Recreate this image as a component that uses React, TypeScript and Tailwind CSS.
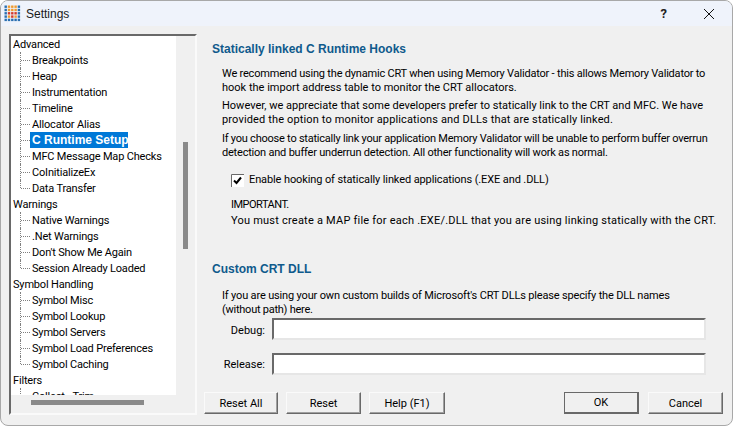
function Btn({ label, w, def }: { label: string; w: string; def?: boolean }) {
  return (
    <div className={`${w} h-[22px] shrink-0 flex items-center justify-center bg-[#f0f0f0] leading-none border ${def ? "border-[#696969] border-r-2 border-b-2" : "border-t-[#fafafa] border-l-[#fafafa] border-r-[#696969] border-b-[#696969] shadow-[inset_-1px_-1px_0_#a0a0a0]"}`}>
      {label}
    </div>
  );
}
type Item = { t: string; c?: boolean; sel?: boolean; last?: boolean };
const tree: Item[] = [
  { t: "Advanced" }, { t: "Breakpoints", c: true }, { t: "Heap", c: true }, { t: "Instrumentation", c: true }, { t: "Timeline", c: true },
  { t: "Allocator Alias", c: true }, { t: "C Runtime Setup", c: true, sel: true }, { t: "MFC Message Map Checks", c: true }, { t: "CoInitializeEx", c: true },
  { t: "Data Transfer", c: true, last: true }, { t: "Warnings" }, { t: "Native Warnings", c: true }, { t: ".Net Warnings", c: true },
  { t: "Don't Show Me Again", c: true }, { t: "Session Already Loaded", c: true, last: true }, { t: "Symbol Handling" }, { t: "Symbol Misc", c: true },
  { t: "Symbol Lookup", c: true }, { t: "Symbol Servers", c: true }, { t: "Symbol Load Preferences", c: true }, { t: "Symbol Caching", c: true, last: true },
  { t: "Filters" }, { t: "Collect - Trim", c: true },
];
function Row({ it }: { it: Item }) {
  if (!it.c) return <div className="h-4 pl-[2px] leading-[18px] whitespace-nowrap tracking-[-0.18px]">{it.t}</div>;
  return (
    <div className="h-4 flex items-center whitespace-nowrap relative">
      <span className={`absolute left-[9px] top-0 w-0 border-l border-dotted border-[#808080] ${it.last ? "h-2" : "h-4"}`} />
      <span className="ml-[10px] w-[9px] shrink-0 border-t border-dotted border-[#808080]" />
      {it.sel ? (
        <span className="h-4 w-[98px] pl-[2px] leading-[17px] bg-[#0078d7] text-white font-bold text-[12px] font-['Liberation_Sans',sans-serif]">{it.t}</span>
      ) : (
        <span className="pl-[2px] h-4 leading-[18px] tracking-[-0.18px]">{it.t}</span>
      )}
    </div>
  );
}
const input = "ml-[7px] w-[434px] h-[22px] bg-white border-2 border-t-[#696969] border-l-[#696969] border-r-[#e6e6e6] border-b-[#e6e6e6]";
function cell(r: number, c: number) {
  if (r === 4 || c === 4 || c === 0) return "#2a6fb0";
  if (r === 0) return "#ee9a2e";
  if ((r === 2 && c >= 1 && c <= 3) || (r === 3 && c === 2)) return "#d23a2a";
  return "#ee9a2e";
}
export default function App() {
  return (
    <div className="w-[733px] h-[427px] bg-white overflow-hidden">
      <div className="w-[733px] h-[426px] overflow-hidden bg-[#f0f0f0] text-[11px] text-black font-['Roboto',sans-serif] rounded-lg border border-[#a8a8a8] flex flex-col">
        <div className="h-[25px] shrink-0 bg-[#eff3fb] flex items-center pl-[3px]">
          <svg width="17" height="17" viewBox="0 0 17 17" className="mr-[5px]">
            {[0, 1, 2, 3, 4].map((r) => [0, 1, 2, 3, 4].map((c) => (
              <rect key={`${r}${c}`} x={0.5 + c * 3.3} y={0.5 + r * 3.3} width="2.4" height="2.4" fill={cell(r, c)} />
            )))}
          </svg>
          <span className="text-[12px] font-['Liberation_Sans',sans-serif] text-[#1a1a1a]">Settings</span>
          <span className="ml-auto mr-[36px] text-[13px] font-bold text-[#222]">?</span>
          <svg width="12" height="12" viewBox="0 0 12 12" className="mr-[17px]"><path d="M1 1 L11 11 M11 1 L1 11" stroke="#111" strokeWidth="1" /></svg>
        </div>
        <div className="flex-1 flex min-h-0 pl-[8px] pt-[8px]">
          <div className="w-[188px] h-[381px] shrink-0 flex border-2 border-t-[#696969] border-l-[#696969] border-r-[#fafafa] border-b-[#fafafa]">
            <div className="w-[165px] shrink-0">
              <div className="w-[165px] h-[359px] bg-white overflow-hidden">
                {tree.map((it) => <Row key={it.t} it={it} />)}
              </div>
              <div className="ml-[20px] mt-[5px] w-[113px] h-[5px] bg-[#8a8a8a]" />
            </div>
            <div className="ml-[7px] mt-[106px] w-[5px] h-[107px] bg-[#8a8a8a]" />
          </div>
          <div className="flex-1 min-w-0 pl-[15px]">
            <h1 className="mt-[7px] h-4 font-bold text-[#0f5a8c] text-[12px] leading-4 font-['Liberation_Sans',sans-serif]">Statically linked C Runtime Hooks</h1>
            <div className="ml-[10px] mt-[10px] leading-[14px] whitespace-nowrap">
              <p>
                <span className="tracking-[-0.2px]">We recommend using the dynamic CRT when using Memory Validator - this allows Memory Validator to</span><br />
                <span>hook the import address table to monitor the CRT allocators.</span>
              </p>
              <p className="mt-[4px]">
                <span>However, we appreciate that some developers prefer to statically link to the CRT and MFC. We have</span><br />
                <span className="tracking-[0.14px]">provided the option to monitor applications and DLLs that are statically linked.</span>
              </p>
              <p className="mt-[5px]">
                <span className="tracking-[-0.23px]">If you choose to statically link your application Memory Validator will be unable to perform buffer overrun</span><br />
                <span className="tracking-[-0.21px]">detection and buffer underrun detection. All other functionality will work as normal.</span>
              </p>
            </div>
            <div className="ml-[19px] mt-[13px] h-[14px] flex items-center gap-[5px]">
              <svg width="13" height="13" viewBox="0 0 13 13"><rect width="13" height="13" fill="#fff" /><path d="M0.5 13V0.5H13" fill="none" stroke="#696969" /><path d="M3 6.5l2.5 2.5L10 3.5" fill="none" stroke="#000" strokeWidth="2" /></svg>
              <span className="tracking-[-0.11px]">Enable hooking of statically linked applications (.EXE and .DLL)</span>
            </div>
            <div className="ml-[19px] mt-[10px] leading-4 whitespace-nowrap">
              <div className="tracking-[-0.5px]">IMPORTANT.</div>
              <div className="tracking-[0.22px]">You must create a MAP file for each .EXE/.DLL that you are using linking statically with the CRT.</div>
            </div>
            <h1 className="mt-[32px] h-4 font-bold text-[#0f5a8c] text-[12px] leading-4 font-['Liberation_Sans',sans-serif]">Custom CRT DLL</h1>
            <div className="ml-[10px] mt-[12px] leading-[14px] whitespace-nowrap">
              <span className="tracking-[-0.16px]">If you are using your own custom builds of Microsoft's CRT DLLs please specify the DLL names</span><br />
              <span className="tracking-[-0.25px]">(without path) here.</span>
            </div>
            <div className="mt-[1px] flex items-center h-[22px]">
              <span className="w-[53px] text-right pt-[4px]">Debug:</span>
              <div className={input} />
            </div>
            <div className="mt-[13px] flex items-center h-[22px]">
              <span className="w-[53px] text-right pt-[3px]">Release:</span>
              <div className={input} />
            </div>
            <div className="mt-[17px] flex items-center -ml-[8px]">
              <Btn label="Reset All" w="w-[74px]" />
              <div className="w-[8px] shrink-0" />
              <Btn label="Reset" w="w-[75px]" />
              <div className="w-[8px] shrink-0" />
              <Btn label="Help (F1)" w="w-[76px]" />
              <div className="w-[119px] shrink-0" />
              <Btn label="OK" w="w-[75px]" def />
              <div className="w-[9px] shrink-0" />
              <Btn label="Cancel" w="w-[75px]" />
            </div>
          </div>
        </div>
      </div>
    </div>
  );
}
